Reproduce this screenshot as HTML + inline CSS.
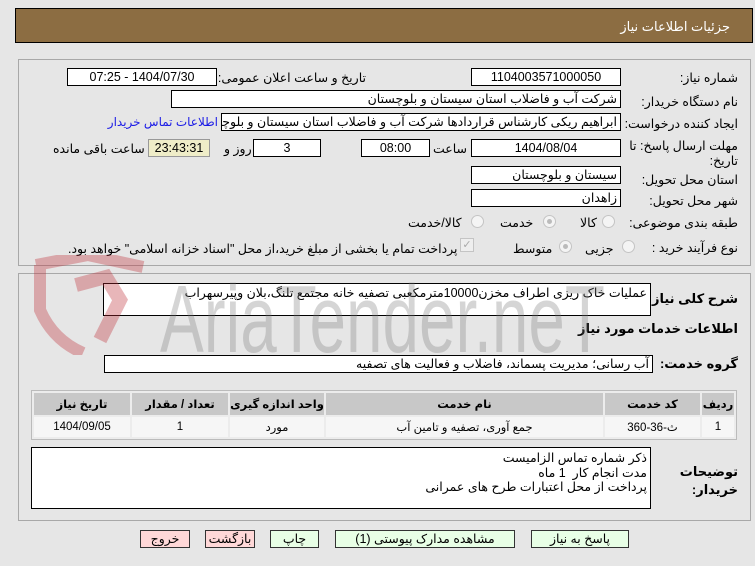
<!DOCTYPE html>
<html><head><meta charset="utf-8"><style>
body{margin:0;width:755px;height:566px;background:#e6e6e6;font-family:"Liberation Sans","DejaVu Sans",sans-serif;font-size:12px;color:#000;position:relative;overflow:hidden}
.a{position:absolute}
.hdr{left:15px;top:8px;width:738px;height:35px;background:#8c6d42;border:1px solid #000;box-sizing:border-box}
.hdr span{position:absolute;right:22px;top:10px;color:#fff;font-size:13px}
.panel{border:1px solid #a8a8a8;box-sizing:border-box}
.in{position:absolute;background:#fff;border:1px solid #000;box-sizing:border-box;height:18px;line-height:16px;font-size:12.5px;padding:0 3px;white-space:nowrap;overflow:hidden;direction:rtl}
.c{text-align:center}
.lb{position:absolute;white-space:nowrap;direction:rtl;font-size:12.5px}
.rad{position:absolute;width:11px;height:11px;border-radius:50%;border:1px solid #c4c4c4;background:#f4f4f4}
.rad.on::after{content:"";position:absolute;left:3px;top:3px;width:5px;height:5px;border-radius:50%;background:#bbb}
table{border-collapse:separate;border-spacing:2px;background:#ececec}
td,th{font-size:11.5px;text-align:center;white-space:nowrap;padding:0}
th{background:#c8c8c8;height:22px;font-weight:bold}
td{height:20px;background:#f6f6f6}
.btn{position:absolute;top:530px;height:18px;border:1px solid #333;box-sizing:border-box;background:#e8ffe6;text-align:center;line-height:16px;font-size:12.5px}
.red{background:#ffd8d8}
.wm{z-index:10;pointer-events:none}
</style></head><body>
<div class="a hdr"><span>جزئیات اطلاعات نیاز</span></div>

<div class="a panel" style="left:18px;top:59px;width:733px;height:207px"></div>
<div class="a panel" style="left:18px;top:273px;width:733px;height:248px"></div>

<!-- row1 -->
<div class="lb" style="right:17px;top:70px">شماره نیاز:</div>
<div class="in c" style="left:471px;top:68px;width:150px">1104003571000050</div>
<div class="lb" style="right:389px;top:70px">تاریخ و ساعت اعلان عمومی:</div>
<div class="in c" style="left:67px;top:68px;width:150px">1404/07/30 - 07:25</div>
<!-- row2 -->
<div class="lb" style="right:17px;top:94px">نام دستگاه خریدار:</div>
<div class="in" style="left:171px;top:90px;width:450px">شرکت آب و فاضلاب استان سیستان و بلوچستان</div>
<!-- row3 -->
<div class="lb" style="right:17px;top:116px">ایجاد کننده درخواست:</div>
<div class="in" style="left:221px;top:113px;width:400px">ابراهیم ریکی کارشناس قراردادها شرکت آب و فاضلاب استان سیستان و بلوچستان</div>
<div class="lb" style="right:537px;top:115px;color:#1a1ae6;font-size:12px">اطلاعات تماس خریدار</div>
<!-- row4 -->
<div class="lb" style="right:17px;top:139px;text-align:right;line-height:15px">مهلت ارسال پاسخ: تا<br>تاریخ:</div>
<div class="in c" style="left:471px;top:139px;width:150px">1404/08/04</div>
<div class="lb" style="left:433px;top:141px">ساعت</div>
<div class="in c" style="left:361px;top:139px;width:69px">08:00</div>
<div class="in c" style="left:253px;top:139px;width:68px">3</div>
<div class="lb" style="left:224px;top:141px">روز و</div>
<div class="in c" style="left:148px;top:139px;width:62px;background:#efedc8;border-color:#999">23:43:31</div>
<div class="lb" style="left:53px;top:141px">ساعت باقی مانده</div>
<!-- row5/6 -->
<div class="lb" style="right:17px;top:172px">استان محل تحویل:</div>
<div class="in" style="left:471px;top:166px;width:150px">سیستان و بلوچستان</div>
<div class="lb" style="right:17px;top:193px">شهر محل تحویل:</div>
<div class="in" style="left:471px;top:189px;width:150px">زاهدان</div>
<!-- row7 -->
<div class="lb" style="right:17px;top:215px">طبقه بندی موضوعی:</div>
<div class="rad" style="left:602px;top:215px"></div><div class="lb" style="left:580px;top:215px">کالا</div>
<div class="rad on" style="left:543px;top:215px"></div><div class="lb" style="left:500px;top:215px">خدمت</div>
<div class="rad" style="left:471px;top:215px"></div><div class="lb" style="left:408px;top:215px">کالا/خدمت</div>
<!-- row8 -->
<div class="lb" style="right:17px;top:240px">نوع فرآیند خرید :</div>
<div class="rad" style="left:622px;top:240px"></div><div class="lb" style="left:585px;top:241px">جزیی</div>
<div class="rad on" style="left:559px;top:240px"></div><div class="lb" style="left:513px;top:241px">متوسط</div>
<div class="a" style="left:460px;top:238px;width:12px;height:12px;border:1px solid #c4c4c4;background:#eee;color:#aaa;font-size:11px;line-height:12px;text-align:center">✓</div>
<div class="lb" style="left:68px;top:241px">پرداخت تمام یا بخشی از مبلغ خرید،از محل "اسناد خزانه اسلامی" خواهد بود.</div>

<!-- section2 -->
<div class="lb" style="right:17px;top:291px;font-weight:bold;font-size:13px">شرح کلی نیاز:</div>
<div class="in" style="left:103px;top:283px;width:548px;height:33px;background:#fff;line-height:18px">عملیات خاک ریزی اطراف مخزن10000مترمکعبی تصفیه خانه مجتمع تلنگ،بلان وپیرسهراب</div>
<div class="lb" style="right:17px;top:321px;font-weight:bold;font-size:13px">اطلاعات خدمات مورد نیاز</div>
<div class="lb" style="right:17px;top:356px;font-weight:bold;font-size:13px">گروه خدمت:</div>
<div class="in" style="left:104px;top:355px;width:549px">آب رسانی؛ مدیریت پسماند، فاضلاب و فعالیت های تصفیه</div>

<table class="a" style="left:31px;top:390px;width:706px;direction:rtl;border:1px solid #bbb">
<tr><th style="width:32px">ردیف</th><th style="width:95px">کد خدمت</th><th>نام خدمت</th><th style="width:94px">واحد اندازه گیری</th><th style="width:96px">تعداد / مقدار</th><th style="width:96px">تاریخ نیاز</th></tr>
<tr><td>1</td><td>ث-36-360</td><td>جمع آوری، تصفیه و تامین آب</td><td>مورد</td><td>1</td><td>1404/09/05</td></tr>
</table>

<div class="lb" style="right:17px;top:463px;font-weight:bold;font-size:13px;text-align:right;line-height:18px">توضیحات<br>خریدار:</div>
<div class="in" style="left:31px;top:447px;width:620px;height:62px;line-height:14.5px;white-space:normal;padding-top:3px;font-size:12.5px">ذکر شماره تماس الزامیست<br>مدت انجام کار&nbsp; 1 ماه<br>پرداخت از محل اعتبارات طرح های عمرانی</div>

<div class="btn" style="left:531px;width:98px">پاسخ به نیاز</div>
<div class="btn" style="left:335px;width:180px">مشاهده مدارک پیوستی (1)</div>
<div class="btn" style="left:270px;width:49px">چاپ</div>
<div class="btn red" style="left:205px;width:50px">بازگشت</div>
<div class="btn red" style="left:140px;width:50px">خروج</div>

<!-- watermark overlay -->
<svg class="a wm" style="left:28px;top:255px" width="130" height="100" viewBox="0 0 130 100"><g opacity="0.35" fill="none" stroke="#c0303a"><path d="M8 10 L60 0 L115 12" stroke-width="12"/><path d="M12 10 L12 55 Q25 85 55 98" stroke-width="12"/><path d="M48 30 L78 22 L92 45 L72 85" stroke-width="14"/></g></svg>
<svg class="a wm" style="left:155px;top:270px" width="470" height="100"><text x="5" y="82" font-family="Liberation Sans Narrow, Liberation Sans, sans-serif" font-size="96" fill="#777" opacity="0.3" textLength="445" lengthAdjust="spacingAndGlyphs">AriaTender.neT</text></svg>
</body></html>
